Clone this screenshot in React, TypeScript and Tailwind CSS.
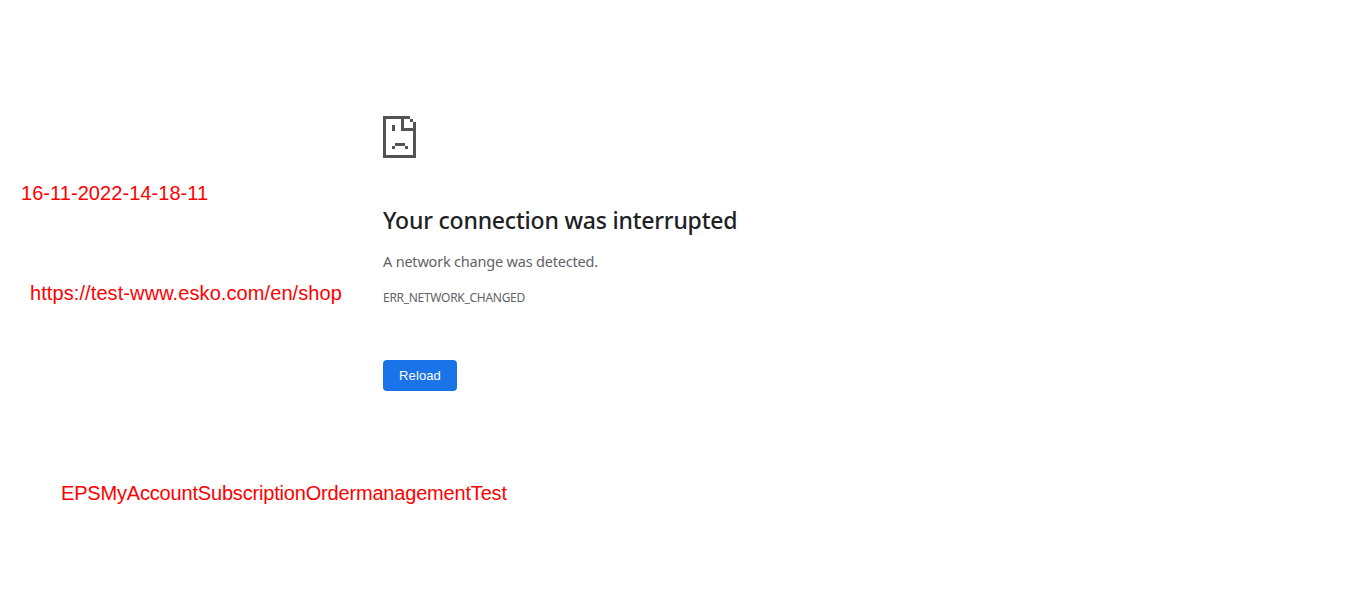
const stamp =
  "absolute whitespace-nowrap font-['Liberation_Sans',Arial,sans-serif] text-xl leading-6 text-[#ff0000]";

function SadPageIcon() {
  return (
    <svg
      className="block h-[42px] w-[33px] text-[#535353]"
      viewBox="0 0 33 42"
      fill="currentColor"
      shapeRendering="crispEdges"
      aria-hidden="true"
    >
      <path d="M0 0h27v3h-6v9h9V6h3v36H0zM3 3v36h27V15H18V3zM27 3h3v3h-3zM9 9h3v6H9zM12 27h10v3H12zM9 30h3v3H9zM22 30h3v3h-3z" fillRule="evenodd" />
    </svg>
  );
}

export default function App() {
  return (
    <div className="relative h-[612px] overflow-hidden bg-white">
      <main className="ml-[383px] flex w-[600px] flex-col items-start pt-[116px] font-['Noto_Sans',sans-serif] text-[#5f6368]">
        <SadPageIcon />
        <h1 className="mt-[47px] whitespace-nowrap text-[23px] leading-[30px] font-medium tracking-[-0.2px] text-[#202124]">
          Your connection was interrupted
        </h1>
        <p className="mt-[14px] whitespace-nowrap text-[14.5px] leading-6 tracking-[-0.2px]">
          A network change was detected.
        </p>
        <p className="mt-[13px] whitespace-nowrap text-xs leading-6 tracking-[-0.29px]">ERR_NETWORK_CHANGED</p>
        <button className="mt-[50px] h-[31px] w-[74px] rounded bg-[#1a73e8] font-['Liberation_Sans',Arial,sans-serif] text-[13px] tracking-[0.1px] text-white">
          Reload
        </button>
      </main>
      <span className={`${stamp} left-[21px] top-[181px] tracking-[0.06px]`}>16-11-2022-14-18-11</span>
      <span className={`${stamp} left-[30px] top-[281px] tracking-[0.09px]`}>https://test-www.esko.com/en/shop</span>
      <span className={`${stamp} left-[61px] top-[481px] tracking-[-0.18px]`}>
        EPSMyAccountSubscriptionOrdermanagementTest
      </span>
    </div>
  );
}
